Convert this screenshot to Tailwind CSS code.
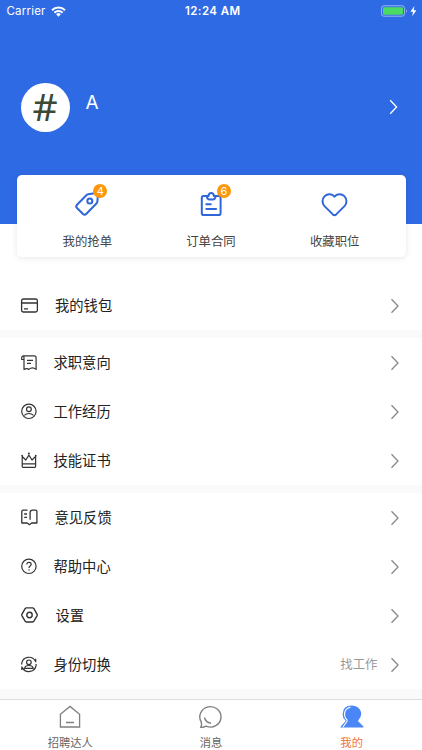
<!DOCTYPE html>
<html lang="zh-CN">
<head>
    <meta charset="UTF-8">
    <meta name="viewport" content="width=device-width, initial-scale=1.0">
    <title>我的</title>
    <script src="https://cdn.jsdelivr.net/npm/@tailwindcss/browser@4"></script>
</head>
<body class="bg-white font-['Inter','Noto_Sans_CJK_SC',sans-serif]">
<div class="w-[422px] h-[750px] flex flex-col overflow-hidden">
    <!-- Header -->
    <header class="h-[224px] shrink-0 bg-[#2f6ae5] text-white">
        <div class="h-[23px] grid grid-cols-3 items-center pl-[6.5px] pr-[5px] text-[11.5px]">
            <div class="flex items-center gap-[5px]">
                <span class="tracking-[0.2px]">Carrier</span>
                <svg class="w-[15px] h-[11px]" viewBox="0 0 15 11" fill="none" stroke="currentColor" stroke-width="2">
                    <path d="M1 4.2a9.2 9.2 0 0 1 13 0M3.4 6.7a5.8 5.8 0 0 1 8.2 0"/>
                    <path d="M7.5 10.7L5.1 8.3a3.4 3.4 0 0 1 4.8 0z" fill="currentColor" stroke="none"/>
                </svg>
            </div>
            <span class="text-center font-semibold tracking-[0.4px] whitespace-nowrap pl-[2px]">12:24 AM</span>
            <svg class="w-[36px] h-[12px] justify-self-end -mt-px" viewBox="0 0 36 12">
                <rect x=".5" y=".8" width="23" height="10.4" rx="2.4" fill="none" stroke="#fff" stroke-opacity=".5"/>
                <rect x="2" y="2.3" width="20" height="7.4" rx="1.2" fill="#4cd964"/>
                <path d="M25 4.3a2 2 0 0 1 0 3.4z" fill="#fff" fill-opacity=".5"/>
                <path d="M33.4.9L29.4 6.7h2.6l-.8 4.5 4.2-6h-2.7z" fill="#fff"/>
            </svg>
        </div>
        <div class="mt-[59.5px] flex items-center pl-[20.5px] pr-[23px]">
            <div class="size-[49px] rounded-full bg-white flex items-center justify-center pb-[4px] text-[39px] leading-none text-[#3b4a35] font-['Noto_Sans',sans-serif]">#</div>
            <span class="ml-[16px] mb-[8px] text-[19px] leading-[24px]">A</span>
            <svg class="ml-auto w-[10px] h-[16px]" viewBox="0 0 10 16" fill="none" stroke="currentColor" stroke-width="1.3">
                <path d="M1.2 1.3L7.6 8l-6.4 6.7"/>
            </svg>
        </div>
    </header>

    <!-- Shortcuts -->
    <section class="relative shrink-0 -mt-[49px] mx-[16.5px] h-[82px] rounded-[5px] bg-white shadow-[0_1px_6px_rgba(0,0,0,0.1)] grid grid-cols-3 px-[9px] text-[12.4px] text-[#444]">
        <a class="flex flex-col items-center pt-[14px]">
            <span class="relative">
                <svg class="size-[30px] text-[#2f66d8]" viewBox="0 0 30 30" fill="none" stroke="currentColor" stroke-width="2" stroke-linejoin="round">
                    <path d="M16.2 5.2L22.5 4.2q3.3-.3 3.3 3l-.4 5.2q-.1 1.2-1 2.1L14.2 25q-1.6 1.6-3.2 0l-6-6q-1.6-1.6 0-3.2L14.6 6q.7-.7 1.6-.8z"/>
                    <circle cx="17.8" cy="12" r="2.5"/>
                </svg>
                <span class="absolute left-[21px] -top-[5px] size-[14px] rounded-full bg-[#ff970c] text-white text-[11px] leading-[14px] text-center">4</span>
            </span>
            <span class="mt-[12px] leading-[20px] pt-px">我的抢单</span>
        </a>
        <a class="flex flex-col items-center pt-[14px]">
            <span class="relative">
                <svg class="size-[30px] text-[#2f66d8]" viewBox="0 0 30 30" fill="none" stroke="currentColor" stroke-width="2" stroke-linejoin="round" stroke-linecap="round">
                    <path d="M10.8 7H7.6Q5.8 7 5.8 8.8v15.4q0 1.8 1.8 1.8h15.2q1.8 0 1.8-1.8V8.8q0-1.8-1.8-1.8h-3.2"/>
                    <path d="M10.800 7h1.600q.4-3 2.800-3t2.800 3h1.600q-.2 3.500-2.800 3.500h-3.200q-2.600 0-2.800-3.500zM10.300 15.300h4.500M10.300 20h9.800"/>
                </svg>
                <span class="absolute left-[21px] -top-[5px] size-[14px] rounded-full bg-[#ff970c] text-white text-[11px] leading-[14px] text-center">6</span>
            </span>
            <span class="mt-[12px] leading-[20px] pt-px">订单合同</span>
        </a>
        <a class="flex flex-col items-center pt-[14px]">
            <svg class="size-[30px] text-[#2f66d8]" viewBox="0 0 30 30" fill="none" stroke="currentColor" stroke-width="2" stroke-linejoin="round">
                <path d="M14.5 7.7C12.3 4.5 7.5 4.3 4.7 7.1c-2.9 2.9-2.8 7.2-.2 10l8.3 8.3q1.7 1.5 3.4 0l8.300-8.300c2.600-2.800 2.700-7.100-.2-10-2.800-2.800-7.600-2.600-9.800.6z"/>
            </svg>
            <span class="mt-[12px] leading-[20px] pt-px">收藏职位</span>
        </a>
    </section>

    <!-- Menu -->
    <main class="shrink-0 mt-[24px] h-[418px] bg-[#fafafa] flex flex-col gap-[8px] text-[14.3px] text-[#222]">
        <div class="bg-white">
            <a class="h-[49px] flex items-center pl-[20px] pr-[22px]">
                <svg class="size-[18px]" viewBox="0 0 18 18" fill="none" stroke="#333" stroke-width="1.3">
                    <rect x="1.6" y="2" width="15.8" height="13" rx="1.8"/>
                    <path d="M1.6 6h15.8M4 11.8h4"/>
                </svg>
                <span class="ml-[17px]">我的钱包</span>
                <svg class="ml-auto w-[10px] h-[16px]" viewBox="0 0 10 16" fill="none" stroke="#888" stroke-width="1.3"><path d="M1.5 1.3L8 8l-6.5 6.7"/></svg>
            </a>
        </div>
        <div class="bg-white">
            <a class="h-[49px] flex items-center pl-[20px] pr-[22px]">
                <svg class="size-[18px]" viewBox="0 0 18 18" fill="none" stroke="#333" stroke-width="1.2" stroke-linejoin="round">
                    <path d="M4 5.5H1.7V3.800q0-2 2-2h10.400q2 0 2 2v11.600q-3.600-3-7.200 0-2-1.500-4.900 0V4Q4 1.800 2.900 2M7 6.300h6M7 9.300h4"/>
                </svg>
                <span class="ml-[15.5px]">求职意向</span>
                <svg class="ml-auto w-[10px] h-[16px]" viewBox="0 0 10 16" fill="none" stroke="#888" stroke-width="1.3"><path d="M1.5 1.3L8 8l-6.5 6.7"/></svg>
            </a>
            <a class="h-[49px] flex items-center pl-[20px] pr-[22px]">
                <svg class="size-[18px]" viewBox="0 0 18 18" fill="none" stroke="#333" stroke-width="1.2">
                    <circle cx="8.9" cy="8.3" r="7.2"/>
                    <circle cx="8.9" cy="6.3" r="2.4"/>
                    <path d="M4.3 12.4q1.8-1.9 4.6-1.9t4.6 1.9"/>
                </svg>
                <span class="ml-[15.5px]">工作经历</span>
                <svg class="ml-auto w-[10px] h-[16px]" viewBox="0 0 10 16" fill="none" stroke="#888" stroke-width="1.3"><path d="M1.5 1.3L8 8l-6.5 6.7"/></svg>
            </a>
            <a class="h-[49px] flex items-center pl-[20px] pr-[22px]">
                <svg class="size-[18px]" viewBox="0 0 18 18" fill="none" stroke="#333" stroke-width="1.2" stroke-linejoin="round">
                    <path d="M2.2 14.5V4.5L5.800 8 8.900 3.200 12 8l3.600-3.500v10q0 .8-.8.8H3q-.8 0-.8-.8zM2.200 11.800h13.400"/>
                    <g fill="#333" stroke="none"><circle cx="2.1" cy="3.6" r=".9"/><circle cx="8.9" cy="1.6" r="1"/><circle cx="15.7" cy="3.6" r=".9"/></g>
                </svg>
                <span class="ml-[15.5px]">技能证书</span>
                <svg class="ml-auto w-[10px] h-[16px]" viewBox="0 0 10 16" fill="none" stroke="#888" stroke-width="1.3"><path d="M1.5 1.3L8 8l-6.5 6.7"/></svg>
            </a>
        </div>
        <div class="bg-white">
            <a class="h-[49px] flex items-center pl-[20px] pr-[22px]">
                <svg class="size-[18px]" viewBox="0 0 18 18" fill="none" stroke="#333" stroke-width="1.3" stroke-linejoin="round">
                    <path d="M7.500 1.200H3.200q-1.400 0-1.400 1.400V14h5.400l2.200 1.700 2.200-1.700h5.300V2.600q0-1.400-1.400-1.400h-2.700q-2.700 0-2.700 2.400v7.200M4.200 5h2.800M4.200 8.300h2.800"/>
                </svg>
                <span class="ml-[16.5px]">意见反馈</span>
                <svg class="ml-auto w-[10px] h-[16px]" viewBox="0 0 10 16" fill="none" stroke="#888" stroke-width="1.3"><path d="M1.5 1.3L8 8l-6.5 6.7"/></svg>
            </a>
            <a class="h-[49px] flex items-center pl-[20px] pr-[22px]">
                <svg class="size-[18px]" viewBox="0 0 18 18" fill="none" stroke="#333" stroke-width="1.2">
                    <circle cx="8.9" cy="8.3" r="7.2"/>
                    <path d="M6.8 6.6q0-2.3 2.2-2.3t2.2 2q0 1-1.1 1.7T9 10.100M9 11.300v1.300"/>
                </svg>
                <span class="ml-[15.5px]">帮助中心</span>
                <svg class="ml-auto w-[10px] h-[16px]" viewBox="0 0 10 16" fill="none" stroke="#888" stroke-width="1.3"><path d="M1.5 1.3L8 8l-6.5 6.7"/></svg>
            </a>
            <a class="h-[49px] flex items-center pl-[20px] pr-[22px]">
                <svg class="size-[18px]" viewBox="0 0 18 18" fill="none" stroke="#333" stroke-width="1.4" stroke-linejoin="round">
                    <path d="M6.4.900h6.200q.8 0 1.300.8l3.100 5.400q.5.900 0 1.800l-3.100 5.300q-.5.800-1.300.8H6.400q-.8 0-1.300-.8L2 8.900q-.5-.9 0-1.800L5.100 1.700q.5-.8 1.300-.8z"/>
                    <circle cx="9.5" cy="8" r="2.7"/>
                </svg>
                <span class="ml-[17.5px]">设置</span>
                <svg class="ml-auto w-[10px] h-[16px]" viewBox="0 0 10 16" fill="none" stroke="#888" stroke-width="1.3"><path d="M1.5 1.3L8 8l-6.5 6.7"/></svg>
            </a>
            <a class="h-[49px] flex items-center pl-[20px] pr-[22px]">
                <svg class="size-[18px]" viewBox="0 0 18 18" fill="none" stroke="#333" stroke-width="1.2">
                    <path d="M1.700 7.300a7.300 7.300 0 0 1 13.700-2M16.100 9.300a7.300 7.300 0 0 1-13.700 2.300M15.700 2.800v3.400M1.800 14V10.600M1.700 7.300v1.200M16.100 9.500V8"/>
                    <circle cx="8.9" cy="6.3" r="2.3"/>
                    <path d="M4.6 12.3Q5.2 9.500 8.900 9.500t4.300 2.800z"/>
                </svg>
                <span class="ml-[15.5px]">身份切换</span>
                <span class="ml-auto mr-[12.5px] pt-px text-[12.4px] text-[#999]">找工作</span>
                <svg class="w-[10px] h-[16px]" viewBox="0 0 10 16" fill="none" stroke="#888" stroke-width="1.3"><path d="M1.5 1.3L8 8l-6.5 6.7"/></svg>
            </a>
        </div>
    </main>

    <!-- Tab bar -->
    <nav class="grow border-t border-[#dedede] grid grid-cols-3 text-[11.3px] text-[#666]">
        <a class="flex flex-col items-center pt-[5px]">
            <svg class="size-[24px]" viewBox="0 0 24 24" fill="none" stroke="#808080" stroke-width="1.3">
                <path d="M2.4 9.3L12 1.400l9.600 7.900v12.700H2.400zM8 17.500h8"/>
            </svg>
            <span class="mt-[4px] leading-[20px]">招聘达人</span>
        </a>
        <a class="flex flex-col items-center pt-[5px]">
            <svg class="size-[24px]" viewBox="0 0 24 24" fill="none" stroke="#808080" stroke-width="1.4" stroke-linejoin="round">
                <path d="M1.600 22.300q1.500-1.600.6-5.400A10.600 10.200 0 1 1 7.200 21.200q-2.800 1.400-5.600 1.100z"/>
                <path d="M5.500 12.500q1 5 6.500 5.700"/>
            </svg>
            <span class="mt-[4px] leading-[20px]">消息</span>
        </a>
        <a class="flex flex-col items-center pt-[5px] text-[#f0743c]">
            <svg class="size-[24px]" viewBox="0 0 24 24" fill="#4a86f8">
                <path d="M11.500.6C17.500.6 21.200 4.500 21.200 9q0 3.800-2.900 6.200-.5.600.2 1.300l4.700 4.700q.9 1.400-.6 1.400H1.200q-1.200 0-.3-1.400l4.200-4.500q.8-.8 0-1.600Q2.600 13 2.600 9.200 2.900.6 11.500.6z"/>
                <path d="M10.500 1.900Q4.100 3.900 4.500 9.800q.2 3 2.400 5 .6.8 0 1.700L2.800 22.300" fill="none" stroke="#fff" stroke-width="1.100"/>
            </svg>
            <span class="mt-[4px] leading-[20px]">我的</span>
        </a>
    </nav>
</div>
</body>
</html>
